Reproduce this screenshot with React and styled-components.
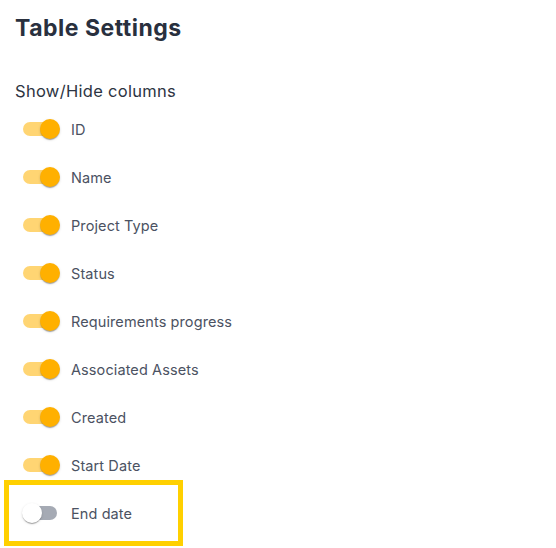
import React, { useState } from "react";
import styled, { createGlobalStyle } from "styled-components";

const GlobalStyle = createGlobalStyle`
  body {
    margin: 0;
    background: #fff;
    font-family: Inter, "Noto Sans", sans-serif;
  }
`;

const Panel = styled.div`
  padding: 14px 15px;
  width: 556px;
  box-sizing: border-box;
`;

const Title = styled.h2`
  margin: 0;
  font-size: 23px;
  font-weight: 700;
  color: #29303e;
  line-height: 28px;
  letter-spacing: 0.5px;
`;

const Subtitle = styled.h3`
  margin: 38px 0 0;
  font-size: 16.5px;
  font-weight: 400;
  color: #2d3442;
  line-height: 22px;
  letter-spacing: 0.3px;
`;

const List = styled.div`
  display: flex;
  flex-direction: column;
  align-items: flex-start;
  margin-top: 3px;
  margin-left: -4px;
`;

const Row = styled.label`
  display: flex;
  align-items: center;
  height: 48px;
  cursor: pointer;
  position: relative;
  white-space: nowrap;

  &::before {
    content: "";
    display: ${(p) => (p.$highlight ? "block" : "none")};
    position: absolute;
    left: -7px;
    top: -9px;
    width: 179px;
    height: 66px;
    box-sizing: border-box;
    border: 5.5px solid #ffd000;
    pointer-events: none;
  }
`;

const SwitchRoot = styled.span`
  position: relative;
  display: inline-flex;
  width: 58px;
  height: 38px;
  padding: 12px;
  box-sizing: border-box;
  flex-shrink: 0;
`;

const Track = styled.span`
  width: 34px;
  height: 14px;
  border-radius: 7px;
  background: ${(p) => (p.$on ? "#ffb300" : "#a5aab4")};
  opacity: ${(p) => (p.$on ? 0.55 : 1)};
`;

const Thumb = styled.span`
  position: absolute;
  top: 9px;
  left: ${(p) => (p.$on ? "29px" : "11px")};
  width: 20px;
  height: 20px;
  border-radius: 50%;
  background: ${(p) => (p.$on ? "#ffb000" : "#fff")};
  box-shadow: 0 2px 1px -1px rgba(0, 0, 0, 0.2), 0 1px 1px 0 rgba(0, 0, 0, 0.14),
    0 1px 3px 0 rgba(0, 0, 0, 0.12);
`;

const Label = styled.span`
  font-size: 14.5px;
  color: #4b5262;
  margin-left: 2px;
  letter-spacing: 0.1px;
`;

const columns = [
  "ID",
  "Name",
  "Project Type",
  "Status",
  "Requirements progress",
  "Associated Assets",
  "Created",
  "Start Date",
  "End date",
];

export default function App() {
  const [visible, setVisible] = useState(
    columns.map((c) => c !== "End date")
  );

  const toggle = (i) =>
    setVisible((v) => v.map((x, j) => (j === i ? !x : x)));

  return (
    <>
      <GlobalStyle />
      <Panel>
        <Title>Table Settings</Title>
        <Subtitle>Show/Hide columns</Subtitle>
        <List>
          {columns.map((c, i) => (
            <Row key={c} $highlight={c === "End date"} onClick={() => toggle(i)}>
              <SwitchRoot>
                <Track $on={visible[i]} />
                <Thumb $on={visible[i]} />
              </SwitchRoot>
              <Label>{c}</Label>
            </Row>
          ))}
        </List>
      </Panel>
    </>
  );
}
